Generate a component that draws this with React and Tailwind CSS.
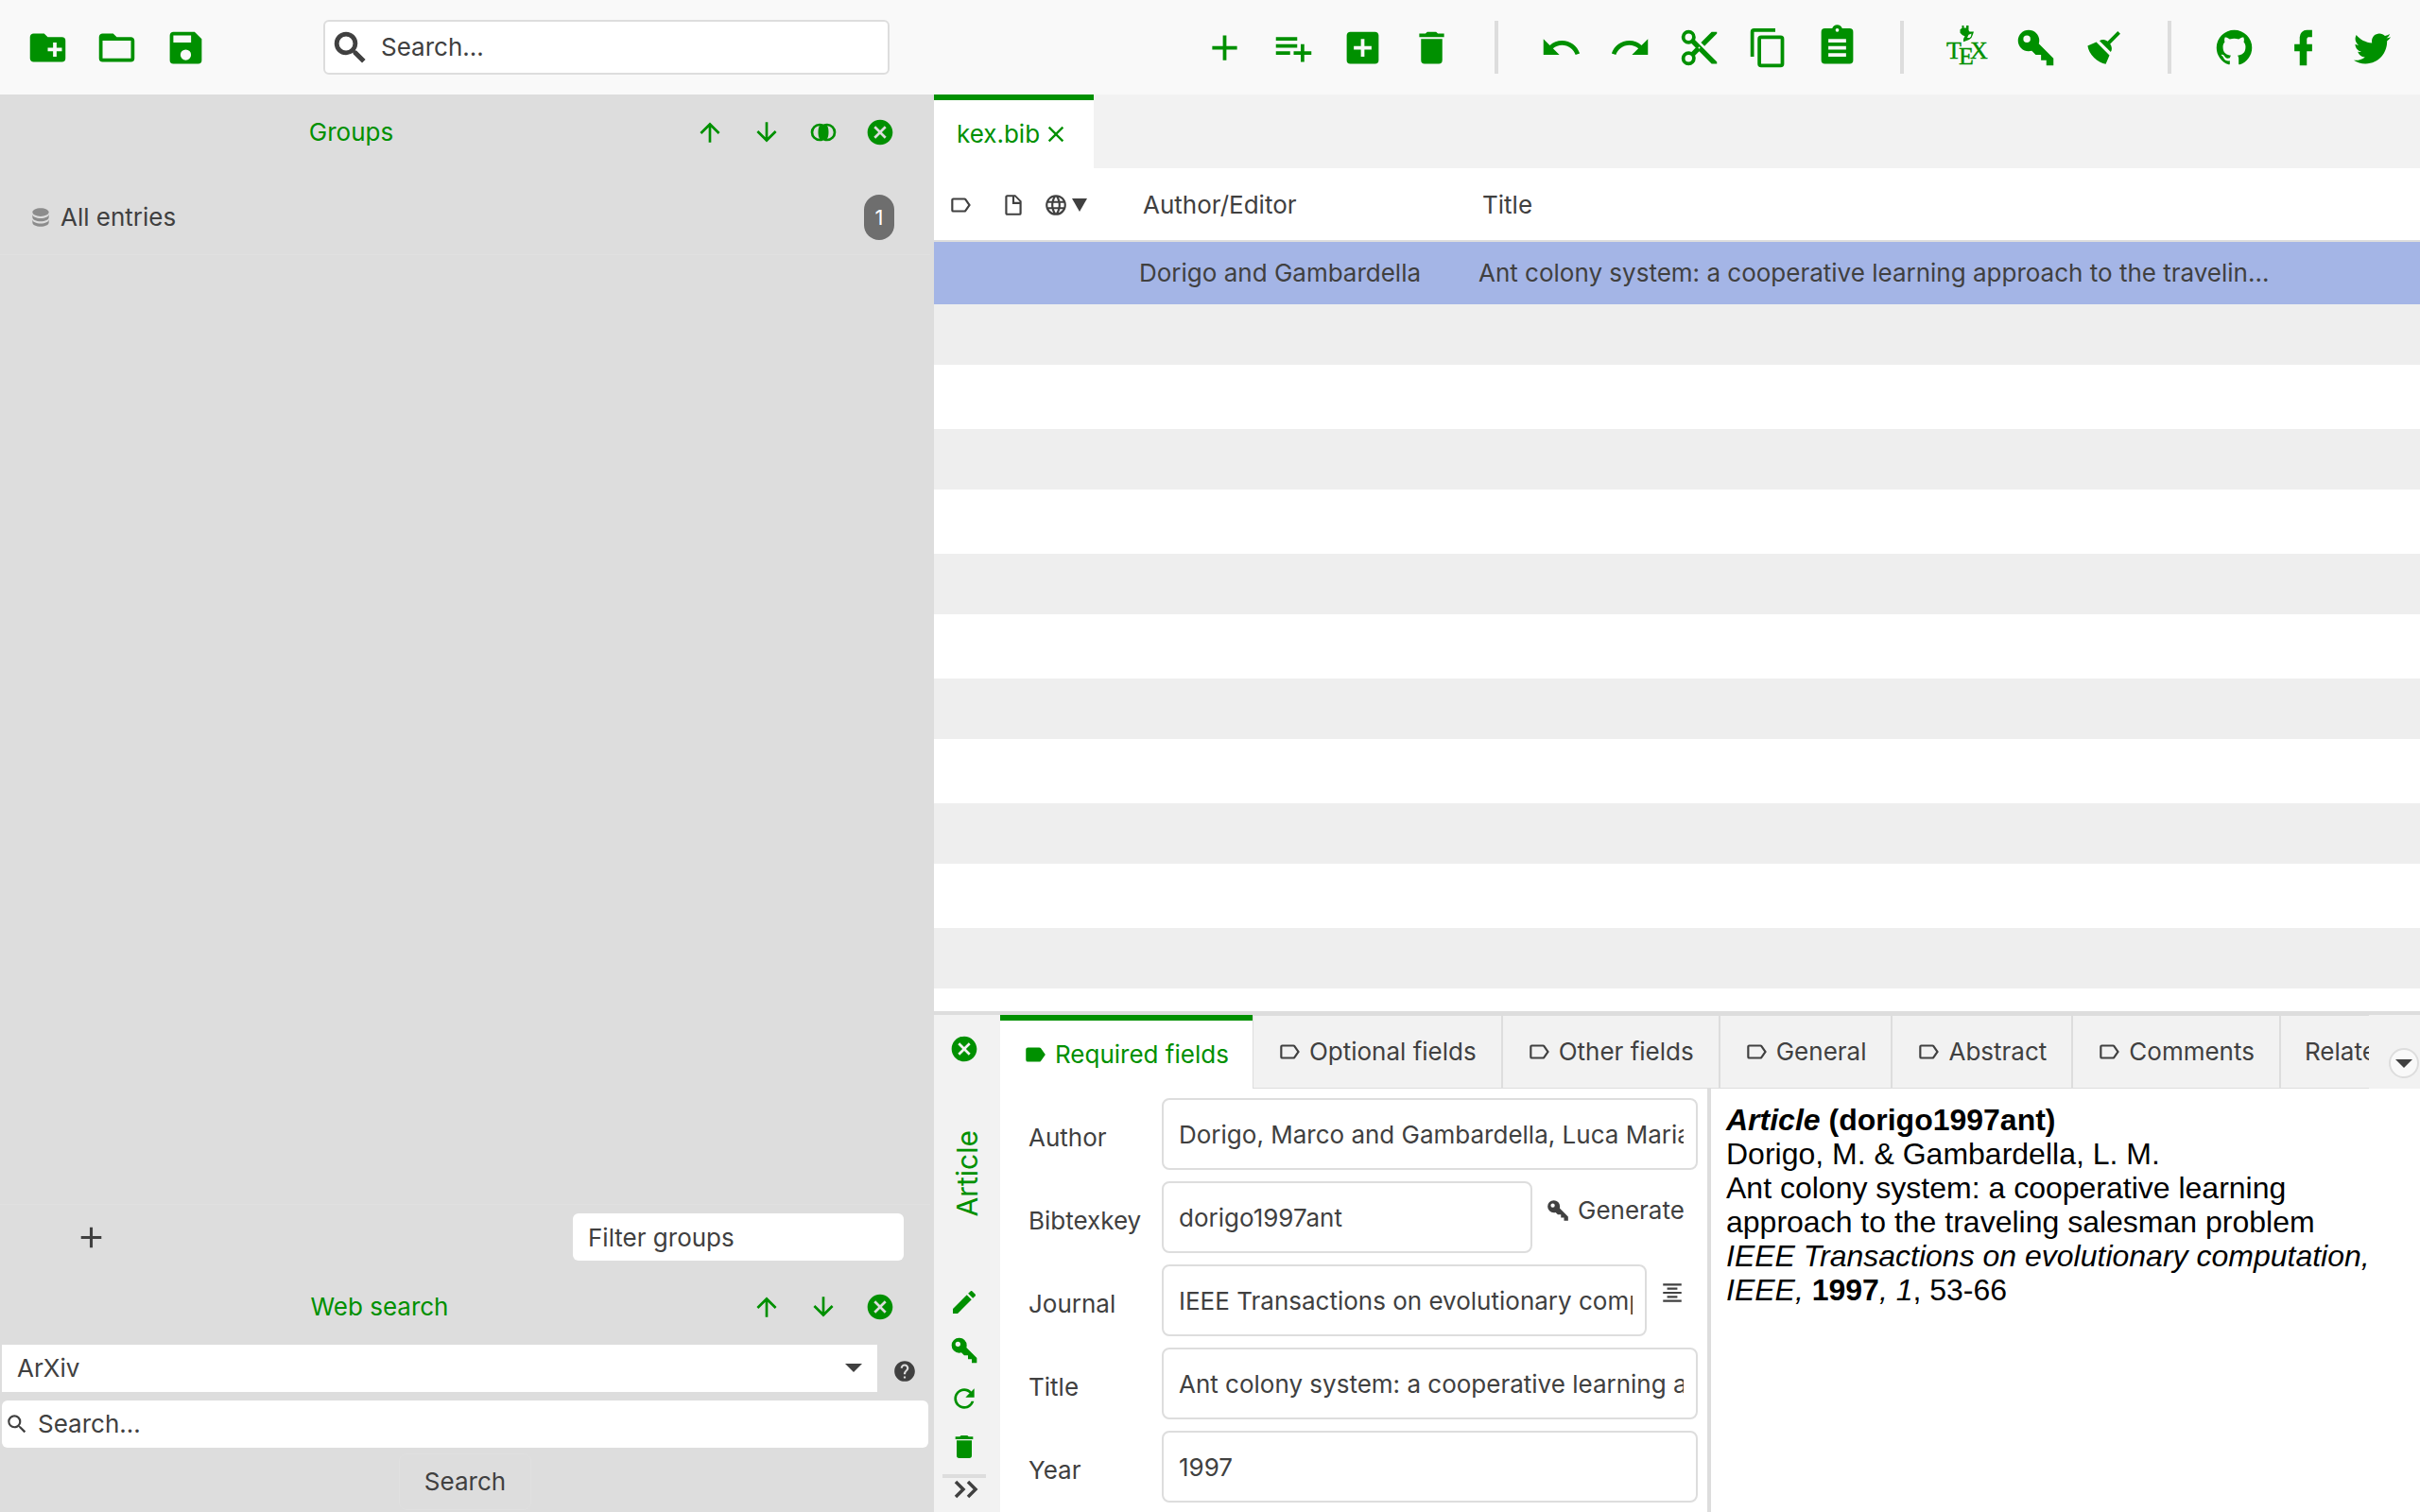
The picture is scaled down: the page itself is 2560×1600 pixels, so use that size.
import React from "react";

const P = {
  folderPlus: "M10,4L12,6H20A2,2 0 0,1 22,8V18A2,2 0 0,1 20,20H4C2.89,20 2,19.1 2,18V6C2,4.89 2.89,4 4,4H10M15,9V12H12V14H15V17H17V14H20V12H17V9H15Z",
  folder: "M20,18H4V8H20M20,6H12L10,4H4C2.89,4 2,4.89 2,6V18A2,2 0 0,0 4,20H20A2,2 0 0,0 22,18V8C22,6.89 21.1,6 20,6Z",
  save: "M15,9H5V5H15M12,19A3,3 0 0,1 9,16A3,3 0 0,1 12,13A3,3 0 0,1 15,16A3,3 0 0,1 12,19M17,3H5C3.89,3 3,3.9 3,5V19A2,2 0 0,0 5,21H19A2,2 0 0,0 21,19V7L17,3Z",
  magnify: "M9.5,3A6.5,6.5 0 0,1 16,9.5C16,11.11 15.41,12.59 14.44,13.73L14.71,14H15.5L20.5,19L19,20.5L14,15.5V14.71L13.73,14.44C12.59,15.41 11.11,16 9.5,16A6.5,6.5 0 0,1 3,9.5A6.5,6.5 0 0,1 9.5,3M9.5,5C7,5 5,7 5,9.5C5,12 7,14 9.5,14C12,14 14,12 14,9.5C14,7 12,5 9.5,5Z",
  plus: "M19,13H13V19H11V13H5V11H11V5H13V11H19V13Z",
  playlistPlus: "M2,16H10V14H2M18,14V10H16V14H12V16H16V20H18V16H22V14M14,6H2V8H14M14,10H2V12H14V10Z",
  plusBox: "M17,13H13V17H11V13H7V11H11V7H13V11H17M19,3H5C3.89,3 3,3.89 3,5V19A2,2 0 0,0 5,21H19A2,2 0 0,0 21,19V5C21,3.89 20.1,3 19,3Z",
  trash: "M19,4H15.5L14.5,3H9.5L8.5,4H5V6H19M6,19A2,2 0 0,0 8,21H16A2,2 0 0,0 18,19V7H6V19Z",
  undo: "M12.5,8C9.85,8 7.45,9 5.6,10.6L2,7V16H11L7.38,12.38C8.77,11.22 10.54,10.5 12.5,10.5C16.04,10.5 19.05,12.81 20.1,16L22.47,15.22C21.08,11.03 17.15,8 12.5,8Z",
  redo: "M18.4,10.6C16.55,9 14.15,8 11.5,8C6.85,8 2.92,11.03 1.54,15.22L3.9,16C4.95,12.81 7.95,10.5 11.5,10.5C13.45,10.5 15.23,11.22 16.62,12.38L13,16H22V7L18.4,10.6Z",
  cut: "M19,3L13,9L15,11L22,4V3M12,12.5A0.5,0.5 0 0,1 11.5,12A0.5,0.5 0 0,1 12,11.5A0.5,0.5 0 0,1 12.5,12A0.5,0.5 0 0,1 12,12.5M6,20A2,2 0 0,1 4,18C4,16.89 4.9,16 6,16A2,2 0 0,1 8,18C8,19.11 7.1,20 6,20M6,8A2,2 0 0,1 4,6C4,4.89 4.9,4 6,4A2,2 0 0,1 8,6C8,7.11 7.1,8 6,8M9.64,7.64C9.87,7.14 10,6.59 10,6A4,4 0 0,0 6,2A4,4 0 0,0 2,6A4,4 0 0,0 6,10C6.59,10 7.14,9.87 7.64,9.64L10,12L7.64,14.36C7.14,14.13 6.59,14 6,14A4,4 0 0,0 2,18A4,4 0 0,0 6,22A4,4 0 0,0 10,18C10,17.41 9.87,16.86 9.64,16.36L12,14L19,21H22V20L9.64,7.64Z",
  copy: "M19,21H8V7H19M19,5H8A2,2 0 0,0 6,7V21A2,2 0 0,0 8,23H19A2,2 0 0,0 21,21V7A2,2 0 0,0 19,5M16,1H4A2,2 0 0,0 2,3V17H4V3H16V1Z",
  clipboard: "M17,9H7V7H17V9M17,13H7V11H17V13M17,17H7V15H17V17M12,1A1,1 0 0,1 13,2A1,1 0 0,1 12,3A1,1 0 0,1 11,2A1,1 0 0,1 12,1M19,1H14.82C14.4,-0.16 13.3,-1 12,-1C10.7,-1 9.6,-0.16 9.18,1H5A2,2 0 0,0 3,3V19A2,2 0 0,0 5,21H19A2,2 0 0,0 21,19V3A2,2 0 0,0 19,1Z",
  key: "M22,18V22H18V19H15V16H12L9.74,13.74C9.19,13.91 8.61,14 8,14A6,6 0 0,1 2,8A6,6 0 0,1 8,2A6,6 0 0,1 14,8C14,8.61 13.91,9.19 13.74,9.74L22,18M7,5A2,2 0 0,0 5,7A2,2 0 0,0 7,9A2,2 0 0,0 9,7A2,2 0 0,0 7,5Z",
  broom: "M19.36,2.72L20.78,4.14L15.06,9.85C16.13,11.39 16.28,13.24 15.38,14.44L9.06,8.12C10.26,7.22 12.11,7.37 13.65,8.44L19.36,2.72M5.93,17.57C3.92,15.56 2.69,13.16 2.35,10.92L7.23,8.83L14.67,16.27L12.58,21.15C10.34,20.81 7.94,19.58 5.93,17.57Z",
  github: "M12,2A10,10 0 0,0 2,12C2,16.42 4.87,20.17 8.84,21.5C9.34,21.58 9.5,21.27 9.5,21C9.5,20.77 9.5,20.14 9.5,19.31C6.73,19.91 6.14,17.97 6.14,17.97C5.68,16.81 5.03,16.5 5.03,16.5C4.12,15.88 5.1,15.9 5.1,15.9C6.1,15.97 6.63,16.93 6.63,16.93C7.5,18.45 8.97,18 9.54,17.76C9.63,17.11 9.89,16.67 10.17,16.42C7.95,16.17 5.62,15.31 5.62,11.5C5.62,10.39 6,9.5 6.65,8.79C6.55,8.54 6.2,7.5 6.75,6.15C6.75,6.15 7.59,5.88 9.5,7.17C10.29,6.95 11.15,6.84 12,6.84C12.85,6.84 13.71,6.95 14.5,7.17C16.41,5.88 17.25,6.15 17.25,6.15C17.8,7.5 17.45,8.54 17.35,8.79C18,9.5 18.38,10.39 18.38,11.5C18.38,15.32 16.04,16.16 13.81,16.41C14.17,16.72 14.5,17.33 14.5,18.26C14.5,19.6 14.5,20.68 14.5,21C14.5,21.27 14.66,21.59 15.17,21.5C19.14,20.16 22,16.42 22,12A10,10 0 0,0 12,2Z",
  facebook: "M17,2V6H15C14.31,6 14,6.81 14,7.5V10H17V14H14V22H10V14H7V10H10V6A4,4 0 0,1 14,2H17Z",
  twitter: "M22.46,6C21.69,6.35 20.86,6.58 20,6.69C20.88,6.16 21.56,5.32 21.88,4.31C21.05,4.81 20.13,5.16 19.16,5.36C18.37,4.5 17.26,4 16,4C13.65,4 11.73,5.92 11.73,8.29C11.73,8.63 11.77,8.96 11.84,9.27C8.28,9.09 5.11,7.38 3,4.79C2.63,5.42 2.42,6.16 2.42,6.94C2.42,8.43 3.17,9.75 4.33,10.5C3.62,10.5 2.96,10.3 2.38,10C2.38,10 2.38,10 2.38,10.03C2.38,12.11 3.86,13.85 5.82,14.24C5.46,14.34 5.08,14.39 4.69,14.39C4.42,14.39 4.15,14.36 3.89,14.31C4.43,16 6,17.26 7.89,17.29C6.43,18.45 4.58,19.13 2.56,19.13C2.22,19.13 1.88,19.11 1.54,19.07C3.44,20.29 5.7,21 8.12,21C16,21 20.33,14.46 20.33,8.79C20.33,8.6 20.33,8.42 20.32,8.23C21.16,7.63 21.88,6.87 22.46,6Z",
  up: "M13,20H11V8L5.5,13.5L4.08,12.08L12,4.16L19.92,12.08L18.5,13.5L13,8V20Z",
  down: "M11,4H13V16L18.5,10.5L19.92,11.92L12,19.84L4.08,11.92L5.5,10.5L11,16V4Z",
  intersect: "M9,5A7,7 0 0,0 2,12A7,7 0 0,0 9,19C10.04,19 11.06,18.76 12,18.32C12.94,18.76 13.96,19 15,19A7,7 0 0,0 22,12A7,7 0 0,0 15,5C13.96,5 12.94,5.24 12,5.68C11.06,5.24 10.04,5 9,5M9,7C7.5,8.2 7.5,15.8 9,17A5,5 0 0,1 4,12A5,5 0 0,1 9,7M15,7A5,5 0 0,1 20,12A5,5 0 0,1 15,17C16.5,15.8 16.5,8.2 15,7Z",
  closeCircle: "M12,2C17.53,2 22,6.47 22,12C22,17.53 17.53,22 12,22C6.47,22 2,17.53 2,12C2,6.47 6.47,2 12,2M15.59,7L12,10.59L8.41,7L7,8.41L10.59,12L7,15.59L8.41,17L12,13.41L15.59,17L17,15.59L13.41,12L17,8.41L15.59,7Z",
  database: "M12,3C7.58,3 4,4.79 4,7C4,9.21 7.58,11 12,11C16.42,11 20,9.21 20,7C20,4.79 16.42,3 12,3M4,9V12C4,14.21 7.58,16 12,16C16.42,16 20,14.21 20,12V9C20,11.21 16.42,13 12,13C7.58,13 4,11.21 4,9M4,14V17C4,19.21 7.58,21 12,21C16.42,21 20,19.21 20,17V14C20,16.21 16.42,18 12,18C7.58,18 4,16.21 4,14Z",
  labelOutline: "M16,17H5V7H16L19.55,12M17.63,5.84C17.27,5.33 16.67,5 16,5H5A2,2 0 0,0 3,7V17A2,2 0 0,0 5,19H16C16.67,19 17.27,18.66 17.63,18.15L22,12L17.63,5.84Z",
  label: "M17.63,5.84C17.27,5.33 16.67,5 16,5H5A2,2 0 0,0 3,7V17A2,2 0 0,0 5,19H16C16.67,19 17.27,18.66 17.63,18.15L22,12L17.63,5.84Z",
  file: "M11,4H6V20H18V11H11V4M13,9H18V8.5L13.5,4H13V9M6,2H14L20,8V20A2,2 0 0,1 18,22H6C4.89,22 4,21.1 4,20V4C4,2.89 4.89,2 6,2Z",
  web: "M16.36,14C16.44,13.34 16.5,12.68 16.5,12C16.5,11.32 16.44,10.66 16.36,10H19.74C19.9,10.64 20,11.31 20,12C20,12.69 19.9,13.36 19.74,14M14.59,19.56C15.19,18.45 15.65,17.25 15.97,16H18.92C17.96,17.65 16.43,18.93 14.59,19.56M14.34,14H9.66C9.56,13.34 9.5,12.68 9.5,12C9.5,11.32 9.56,10.65 9.66,10H14.34C14.43,10.65 14.5,11.32 14.5,12C14.5,12.68 14.43,13.34 14.34,14M12,19.96C11.17,18.76 10.5,17.43 10.09,16H13.91C13.5,17.43 12.83,18.76 12,19.96M8,8H5.08C6.03,6.34 7.57,5.06 9.4,4.44C8.8,5.55 8.35,6.75 8,8M5.08,16H8C8.35,17.25 8.8,18.45 9.4,19.56C7.57,18.93 6.03,17.65 5.08,16M4.26,14C4.1,13.36 4,12.69 4,12C4,11.31 4.1,10.64 4.26,10H7.64C7.56,10.66 7.5,11.32 7.5,12C7.5,12.68 7.56,13.34 7.64,14M12,4.03C12.83,5.23 13.5,6.57 13.91,8H10.09C10.5,6.57 11.17,5.23 12,4.03M18.92,8H15.97C15.65,6.75 15.19,5.55 14.59,4.44C16.43,5.07 17.96,6.34 18.92,8M12,2C6.47,2 2,6.5 2,12A10,10 0 0,0 12,22A10,10 0 0,0 22,12A10,10 0 0,0 12,2Z",
  help: "M15.07,11.25L14.17,12.17C13.45,12.89 13,13.5 13,15H11V14.5C11,13.39 11.45,12.39 12.17,11.67L13.41,10.41C13.78,10.05 14,9.55 14,9C14,7.89 13.1,7 12,7A2,2 0 0,0 10,9H8A4,4 0 0,1 12,5A4,4 0 0,1 16,9C16,9.88 15.64,10.67 15.07,11.25M13,19H11V17H13M12,2A10,10 0 0,0 2,12A10,10 0 0,0 12,22A10,10 0 0,0 22,12C22,6.47 17.5,2 12,2Z",
  pencil: "M20.71,7.04C21.1,6.65 21.1,6 20.71,5.63L18.37,3.29C18,2.9 17.35,2.9 16.96,3.29L15.12,5.12L18.87,8.87M3,17.25V21H6.75L17.81,9.93L14.06,6.18L3,17.25Z",
  refresh: "M17.65,6.35C16.2,4.9 14.21,4 12,4A8,8 0 0,0 4,12A8,8 0 0,0 12,20C15.73,20 18.84,17.45 19.73,14H17.65C16.83,16.33 14.61,18 12,18A6,6 0 0,1 6,12A6,6 0 0,1 12,6C13.66,6 15.14,6.69 16.22,7.78L13,11H20V4L17.65,6.35Z",
  close: "M19,6.41L17.59,5L12,10.59L6.41,5L5,6.41L10.59,12L5,17.59L6.41,19L12,13.41L17.59,19L19,17.59L13.41,12L19,6.41Z",
  alignCenter: "M3,3H21V5H3V3M7,7H17V9H7V7M3,11H21V13H3V11M7,15H17V17H7V15M3,19H21V21H3V19Z",
};

function Icon({ name, className = "size-[26px]" }) {
  return (
    <svg viewBox="0 0 24 24" fill="currentColor" fillRule="evenodd" aria-hidden="true" className={`block shrink-0 overflow-visible ${className}`}>
      <path d={P[name]} />
    </svg>
  );
}

function TexIcon() {
  return (
    <svg viewBox="0 0 44 56" fill="currentColor" fillRule="evenodd" aria-hidden="true" className="block h-[56px] w-[44px] shrink-0 overflow-visible">
      <path d="M16.5 5h2v2.500h2.500V5h2.500v5l1 1.500h4.500l-1 3-1.500 3.500-2.500 2-4 1.500-2 .8v-3l1.500-3-2.500-1-2.500-2.500v-3.500l2-1.500zM26.500 13.500l-3 1.200-1.500 3.300h2.500l1.500-1.500z" />
      <g fontFamily="'Liberation Serif', serif" fontSize="26" stroke="currentColor" strokeWidth="0.4">
        <text x="0" y="40">T</text>
        <text x="13" y="46">E</text>
        <text x="25" y="40">X</text>
      </g>
    </svg>
  );
}

function ToolButton({ name, label, children }) {
  return (
    <button type="button" aria-label={label} className="flex h-[73px] w-[73px] shrink-0 items-center justify-center text-[#009000]">
      {children || <Icon name={name} className="size-[45px]" />}
    </button>
  );
}

function Separator() {
  return <div className="mx-[30px] h-14 w-1 shrink-0 bg-[#ddd]" />;
}

function Toolbar() {
  return (
    <header className="flex h-[100px] shrink-0 items-center bg-[#f9f9f9] px-[14px]">
      <ToolButton name="folderPlus" label="New library" />
      <ToolButton name="folder" label="Open library" />
      <ToolButton name="save" label="Save library" />
      <label className="ml-[109px] flex h-[58px] w-[599px] items-center gap-[11px] rounded-md border-2 border-[#ddd] bg-white pl-[5px]">
        <Icon name="magnify" className="size-[43px] stroke-[#404040] stroke-[0.7]" />
        <input aria-label="Search" placeholder="Search..." className="min-w-0 flex-1 outline-none placeholder:text-[#404040]" />
      </label>
      <div className="ml-auto flex items-center">
        <ToolButton name="plus" label="New article" />
        <ToolButton name="playlistPlus" label="New entry from plain text" />
        <ToolButton name="plusBox" label="New entry" />
        <ToolButton name="trash" label="Delete entry" />
        <Separator />
        <ToolButton name="undo" label="Undo" />
        <ToolButton name="redo" label="Redo" />
        <ToolButton name="cut" label="Cut" />
        <ToolButton name="copy" label="Copy" />
        <ToolButton name="clipboard" label="Paste" />
        <Separator />
        <ToolButton label="Push to TeX editor"><TexIcon /></ToolButton>
        <ToolButton name="key" label="Generate keys" />
        <ToolButton name="broom" label="Clean up" />
        <Separator />
        <ToolButton name="github" label="GitHub" />
        <ToolButton name="facebook" label="Facebook" />
        <ToolButton name="twitter" label="Twitter" />
      </div>
    </header>
  );
}

function PaneHeader({ title, icons }) {
  return (
    <div className="flex h-20 shrink-0 items-center pr-[27px] pl-[22px] text-[#009000]">
      <h2 className="flex-1 text-center">{title}</h2>
      {icons.map(([name, label]) => (
        <button key={name} type="button" aria-label={`${title}: ${label}`} className="flex w-[60px] justify-center">
          <Icon name={name} className="size-8" />
        </button>
      ))}
    </div>
  );
}

function SidePane() {
  return (
    <aside className="flex w-[988px] shrink-0 flex-col bg-[#ddd]">
      <PaneHeader title="Groups" icons={[["up", "Move up"], ["down", "Move down"], ["intersect", "Intersection"], ["closeCircle", "Close"]]} />
      <div className="mr-1 flex-1 border-b border-[#e0e0e0]">
        <div className="flex h-[90px] items-center gap-2 border-b border-[#e0e0e0] pt-[10px] pr-[38px] pl-[30px]">
          <Icon name="database" className="size-[26px] text-[#8c8c8c]" />
          <span className="flex-1">All entries</span>
          <span className="flex h-12 w-8 items-center justify-center rounded-full bg-[#6e6e6e] text-[22px] text-white">1</span>
        </div>
      </div>
      <div className="flex h-[68px] shrink-0 items-center justify-between pr-8 pl-20">
        <button type="button" aria-label="Add group" className="flex size-8 items-center justify-center"><Icon name="plus" className="size-[37px]" /></button>
        <input aria-label="Filter groups" placeholder="Filter groups" className="h-[50px] w-[350px] rounded-md bg-white px-4 outline-none placeholder:text-[#404040]" />
      </div>
      <PaneHeader title="Web search" icons={[["up", "Move up"], ["down", "Move down"], ["closeCircle", "Close"]]} />
      <div className="flex h-[50px] shrink-0 items-center pl-[2px]">
        <div className="relative h-full flex-1">
          <select aria-label="Web search source" className="h-full w-full appearance-none bg-white px-4">
            <option>ArXiv</option>
          </select>
          <svg viewBox="0 0 18 9" className="pointer-events-none absolute top-5 right-4 h-[9px] w-[18px]" fill="#404040"><path d="M0 0h18l-9 9z" /></svg>
        </div>
        <button type="button" aria-label="Help" className="flex w-[60px] justify-center pt-[6px] pr-[2px]"><Icon name="help" /></button>
      </div>
      <label className="mt-[9px] mr-[6px] ml-[2px] flex h-[50px] shrink-0 items-center gap-[9px] rounded-md bg-white pl-[3px]">
        <Icon name="magnify" />
        <input aria-label="Web search query" placeholder="Search..." className="min-w-0 flex-1 outline-none placeholder:text-[#404040]" />
      </label>
      <button type="button" className="mt-[6px] mr-1 mb-[2px] h-[60px] w-[140px] shrink-0 self-center rounded-lg border border-[#e0e0e0]">Search</button>
    </aside>
  );
}

const FILLER = Array.from({ length: 12 }, (_, i) => i);

function EntryTable() {
  return (
    <div className="min-h-0 flex-1 overflow-hidden bg-white">
      <table className="w-full table-fixed border-separate border-spacing-0 text-left">
        <colgroup>
          <col className="w-14" />
          <col className="w-14" />
          <col className="w-[90px]" />
          <col className="w-[359px]" />
          <col />
        </colgroup>
        <thead>
          <tr className="h-[78px]">
            <th className="border-b-2 border-[#ddd] pt-[2px] pl-[15px] font-normal"><Icon name="labelOutline" /></th>
            <th className="border-b-2 border-[#ddd] pt-[2px] pl-[15px] font-normal"><Icon name="file" /></th>
            <th className="border-b-2 border-[#ddd] pt-[2px] pl-1 font-normal">
              <span className="flex items-center gap-1">
                <Icon name="web" />
                <svg viewBox="0 0 16 14" className="h-[14px] w-4" fill="#404040"><path d="M0 0h16l-8 14z" /></svg>
              </span>
            </th>
            <th className="border-b-2 border-[#ddd] pt-[2px] pl-[19px] font-normal">Author/Editor</th>
            <th className="border-b-2 border-[#ddd] pt-[2px] pl-[19px] font-normal">Title</th>
          </tr>
        </thead>
        <tbody>
          <tr className="h-[66px] bg-[#a4b5e6]">
            <td /><td /><td />
            <td className="pl-[15px] whitespace-nowrap">Dorigo and Gambardella</td>
            <td className="truncate pl-[15px]">Ant colony system: a cooperative learning approach to the travelin...</td>
          </tr>
          {FILLER.map((i) => (
            <tr key={i} className="h-[66px] odd:bg-white even:bg-[#eee]">
              <td colSpan={5} className="border-b-2 border-white" />
            </tr>
          ))}
        </tbody>
      </table>
    </div>
  );
}

const INPUT = "h-[76px] min-w-0 flex-1 rounded-lg border-2 border-[#ddd] bg-white pl-4 pr-[13px] outline-none";

function Field({ id, label, value, children }) {
  return (
    <div className="flex h-[76px] items-center">
      <label htmlFor={id} className="w-[141px] shrink-0 pt-2">{label}</label>
      <input id={id} defaultValue={value} className={INPUT} />
      {children}
    </div>
  );
}

const TABS = ["Optional fields", "Other fields", "General", "Abstract", "Comments"];

function EntryEditor() {
  return (
    <section className="flex h-[530px] shrink-0 border-t-4 border-[#ddd]">
      <div className="flex w-[70px] shrink-0 flex-col items-center bg-[#f2f2f2] pr-[6px] text-[#009000]">
        <button type="button" aria-label="Close editor" className="mt-5 flex justify-center"><Icon name="closeCircle" className="size-8" /></button>
        <div className="mt-[70px] ml-[6px] rotate-180 text-[30px] leading-9 [writing-mode:vertical-rl]">Article</div>
        <div className="mt-auto flex flex-col items-center">
          {[["pencil", "Change type"], ["key", "Generate key"], ["refresh", "Update"], ["trash", "Delete"]].map(([n, l]) => (
            <button key={n} type="button" aria-label={l} className="flex h-[51px] items-center"><Icon name={n} className="size-8" /></button>
          ))}
          <div className="mt-1 h-1 w-[46px] bg-[#ddd]" />
          <button type="button" aria-label="More tools" className="mt-[1px] mb-[13px] ml-1 h-[22px] text-[#404040]">
            <svg viewBox="0 0 26 20" className="block h-5 w-[26px]" fill="none" stroke="currentColor" strokeWidth="3.500"><path d="M2 2l8 8-8 8M15 2l8 8-8 8" /></svg>
          </button>
        </div>
      </div>
      <div className="flex min-w-0 flex-1 flex-col">
        <div className="flex h-[78px] shrink-0 bg-[#f2f2f2]">
          <div role="tablist" className="flex min-w-0 flex-1 overflow-hidden">
            <button type="button" role="tab" aria-selected="true" className="flex shrink-0 items-center gap-2 border-t-6 border-[#009000] bg-white pr-[25px] pl-6 text-[#009000]">
              <Icon name="label" />Required fields
            </button>
            {TABS.map((t) => (
              <button key={t} type="button" role="tab" aria-selected="false" className="flex shrink-0 items-center gap-2 border border-[#ddd] pr-[26px] pl-[25px]">
                <Icon name="labelOutline" />{t}
              </button>
            ))}
            <button type="button" role="tab" aria-selected="false" className="shrink-0 border border-[#ddd] px-[25px]">Related articles</button>
          </div>
          <div className="flex w-[54px] shrink-0 items-center justify-end pt-6 pr-[1px]">
            <button type="button" aria-label="More tabs" className="flex size-8 items-center justify-center rounded-full border-2 border-[#ddd] bg-[#f9f9f9]">
              <svg viewBox="0 0 18 9" className="h-[9px] w-[18px]" fill="#404040"><path d="M0 0h18l-9 9z" /></svg>
            </button>
          </div>
        </div>
        <div className="flex min-h-0 flex-1 bg-white">
          <form className="flex w-[748px] shrink-0 flex-col gap-3 pt-[10px] pr-[10px] pl-[30px]">
            <Field id="author" label="Author" value="Dorigo, Marco and Gambardella, Luca Maria" />
            <Field id="bibtexkey" label="Bibtexkey" value="dorigo1997ant">
              <button type="button" className="flex w-[175px] shrink-0 items-center gap-2 pb-[14px] pl-[14px]"><Icon name="key" />Generate</button>
            </Field>
            <Field id="journal" label="Journal" value="IEEE Transactions on evolutionary computation, IEEE">
              <button type="button" aria-label="Toggle abbreviation" className="flex w-[54px] shrink-0 justify-center pb-4"><Icon name="alignCenter" /></button>
            </Field>
            <Field id="title" label="Title" value="Ant colony system: a cooperative learning approach to the traveling salesman problem" />
            <Field id="year" label="Year" value="1997" />
          </form>
          <div className="w-1 shrink-0 bg-[#ddd]" />
          <article className="min-w-0 flex-1 px-4 pt-[15px] font-['Liberation_Sans',sans-serif] text-[32px] leading-9 text-black">
            <p className="font-bold"><i>Article</i> (dorigo1997ant)</p>
            <p>Dorigo, M. &amp; Gambardella, L. M.</p>
            <p>Ant colony system: a cooperative learning<br />approach to the traveling salesman problem</p>
            <p><i>IEEE Transactions on evolutionary computation,<br />IEEE,</i> <b>1997</b><i>, 1</i>, 53-66</p>
          </article>
        </div>
      </div>
    </section>
  );
}

export default function App() {
  return (
    <div className="flex h-screen flex-col overflow-hidden bg-white font-['Inter',sans-serif] text-[26px] leading-8 text-[#404040]">
      <Toolbar />
      <div className="flex min-h-0 flex-1">
        <SidePane />
        <main className="flex min-w-0 flex-1 flex-col">
          <div role="tablist" className="flex h-[78px] shrink-0 bg-[#f2f2f2]">
            <div role="tab" aria-selected="true" className="flex items-center gap-[3px] border-t-6 border-[#009000] bg-white pr-[26px] pl-6 text-[#009000]">
              kex.bib
              <button type="button" aria-label="Close kex.bib"><Icon name="close" className="size-7" /></button>
            </div>
          </div>
          <EntryTable />
          <EntryEditor />
        </main>
      </div>
    </div>
  );
}
